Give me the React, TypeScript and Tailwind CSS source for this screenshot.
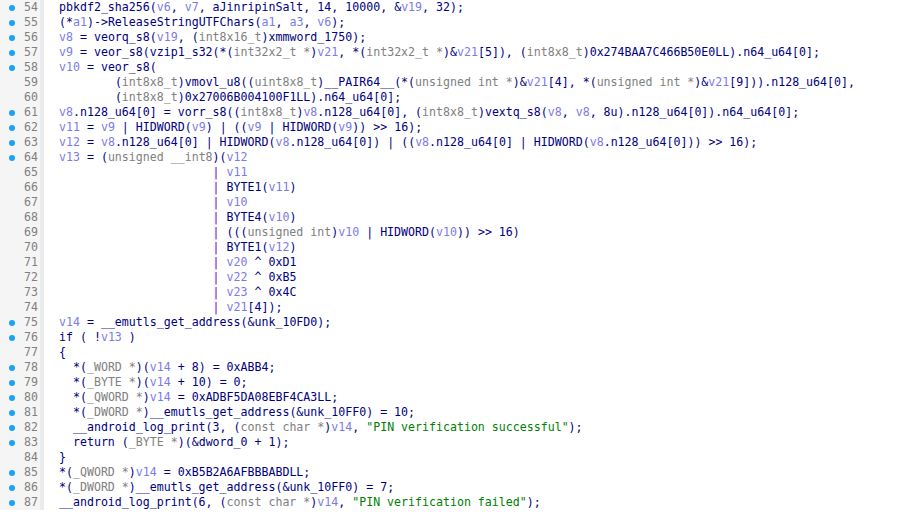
import React from "react";

type Line = {
  n: number;
  dot: boolean;
  text: string;
  bar?: boolean; // continuation line of the big OR expression
};

const code: Line[] = [
  { n: 54, dot: true, text: "pbkdf2_sha256(v6, v7, aJinripinSalt, 14, 10000, &v19, 32);" },
  { n: 55, dot: true, text: "(*a1)->ReleaseStringUTFChars(a1, a3, v6);" },
  { n: 56, dot: true, text: "v8 = veorq_s8(v19, (int8x16_t)xmmword_1750);" },
  { n: 57, dot: true, text: "v9 = veor_s8(vzip1_s32(*(int32x2_t *)v21, *(int32x2_t *)&v21[5]), (int8x8_t)0x274BAA7C466B50E0LL).n64_u64[0];" },
  { n: 58, dot: true, text: "v10 = veor_s8(" },
  { n: 59, dot: false, text: "        (int8x8_t)vmovl_u8((uint8x8_t)__PAIR64__(*(unsigned int *)&v21[4], *(unsigned int *)&v21[9])).n128_u64[0]," },
  { n: 60, dot: false, text: "        (int8x8_t)0x27006B004100F1LL).n64_u64[0];" },
  { n: 61, dot: true, text: "v8.n128_u64[0] = vorr_s8((int8x8_t)v8.n128_u64[0], (int8x8_t)vextq_s8(v8, v8, 8u).n128_u64[0]).n64_u64[0];" },
  { n: 62, dot: true, text: "v11 = v9 | HIDWORD(v9) | ((v9 | HIDWORD(v9)) >> 16);" },
  { n: 63, dot: true, text: "v12 = v8.n128_u64[0] | HIDWORD(v8.n128_u64[0]) | ((v8.n128_u64[0] | HIDWORD(v8.n128_u64[0])) >> 16);" },
  { n: 64, dot: true, text: "v13 = (unsigned __int8)(v12" },
  { n: 65, dot: false, bar: true, text: "v11" },
  { n: 66, dot: false, bar: true, text: "BYTE1(v11)" },
  { n: 67, dot: false, bar: true, text: "v10" },
  { n: 68, dot: false, bar: true, text: "BYTE4(v10)" },
  { n: 69, dot: false, bar: true, text: "(((unsigned int)v10 | HIDWORD(v10)) >> 16)" },
  { n: 70, dot: false, bar: true, text: "BYTE1(v12)" },
  { n: 71, dot: false, bar: true, text: "v20 ^ 0xD1" },
  { n: 72, dot: false, bar: true, text: "v22 ^ 0xB5" },
  { n: 73, dot: false, bar: true, text: "v23 ^ 0x4C" },
  { n: 74, dot: false, bar: true, text: "v21[4]);" },
  { n: 75, dot: true, text: "v14 = __emutls_get_address(&unk_10FD0);" },
  { n: 76, dot: true, text: "if ( !v13 )" },
  { n: 77, dot: false, text: "{" },
  { n: 78, dot: true, text: "  *(_WORD *)(v14 + 8) = 0xABB4;" },
  { n: 79, dot: true, text: "  *(_BYTE *)(v14 + 10) = 0;" },
  { n: 80, dot: true, text: "  *(_QWORD *)v14 = 0xADBF5DA08EBF4CA3LL;" },
  { n: 81, dot: true, text: "  *(_DWORD *)__emutls_get_address(&unk_10FF0) = 10;" },
  { n: 82, dot: true, text: '  __android_log_print(3, (const char *)v14, "PIN verification successful");' },
  { n: 83, dot: true, text: "  return (_BYTE *)(&dword_0 + 1);" },
  { n: 84, dot: false, text: "}" },
  { n: 85, dot: true, text: "*(_QWORD *)v14 = 0xB5B2A6AFBBBABDLL;" },
  { n: 86, dot: true, text: "*(_DWORD *)__emutls_get_address(&unk_10FF0) = 7;" },
  { n: 87, dot: true, text: '__android_log_print(6, (const char *)v14, "PIN verification failed");' },
];

const colors = {
  plain: "text-[#000080]",
  local: "text-[#7b7be6]",
  type: "text-[#808080]",
  str: "text-[#008000]",
};

type Tok = { t: string; k: keyof typeof colors };

const castRe =
  /^\(((?:unsigned |const )?(?:int8x16_t|int32x2_t|int8x8_t|uint8x8_t|int|__int8|_WORD|_BYTE|_QWORD|_DWORD|char)(?: \*)?)\)/;

function tokenize(s: string): Tok[] {
  const out: Tok[] = [];
  let i = 0;
  while (i < s.length) {
    const rest = s.slice(i);
    const str = rest.match(/^"[^"]*"/);
    if (str) {
      out.push({ t: str[0], k: "str" });
      i += str[0].length;
      continue;
    }
    const cast = rest.match(castRe);
    if (cast) {
      out.push({ t: "(", k: "plain" });
      out.push({ t: cast[1], k: "type" });
      out.push({ t: ")", k: "plain" });
      i += cast[0].length;
      continue;
    }
    const id = rest.match(/^[A-Za-z_][A-Za-z0-9_]*/);
    if (id) {
      const k = /^(v|a)\d+$/.test(id[0]) ? "local" : "plain";
      out.push({ t: id[0], k });
      i += id[0].length;
      continue;
    }
    out.push({ t: s[i], k: "plain" });
    i += 1;
  }
  return out;
}

const CodeLine = ({ line }: { line: Line }) => (
  <div className="flex h-[15px] items-center">
    <div className="relative flex h-full w-[40px] shrink-0 items-center justify-end bg-[#f5f5f5] pr-[2px] text-[#808080]">
      {line.dot && (
        <span className="absolute left-[9px] top-[5px] h-[6px] w-[6px] rounded-full bg-[#1ba3f0]" />
      )}
      {line.n}
    </div>
    <div className="h-full w-[4px] shrink-0 bg-[#ebebeb]" />
    <div className="whitespace-pre pl-[15px]">
      {line.bar && (
        <>
          <span>{" ".repeat(22)}</span>
          <span className="text-[#8000c0]">|</span>
          <span> </span>
        </>
      )}
      {tokenize(line.text).map((tk, i) => (
        <span key={i} className={colors[tk.k]}>
          {tk.t}
        </span>
      ))}
    </div>
  </div>
);

export default function App() {
  return (
    <div className="h-[512px] w-full overflow-hidden bg-white font-['DejaVu_Sans_Mono','Liberation_Mono',monospace] text-[11.6px] leading-[15px]">
      {code.map((l) => (
        <CodeLine key={l.n} line={l} />
      ))}
    </div>
  );
}
